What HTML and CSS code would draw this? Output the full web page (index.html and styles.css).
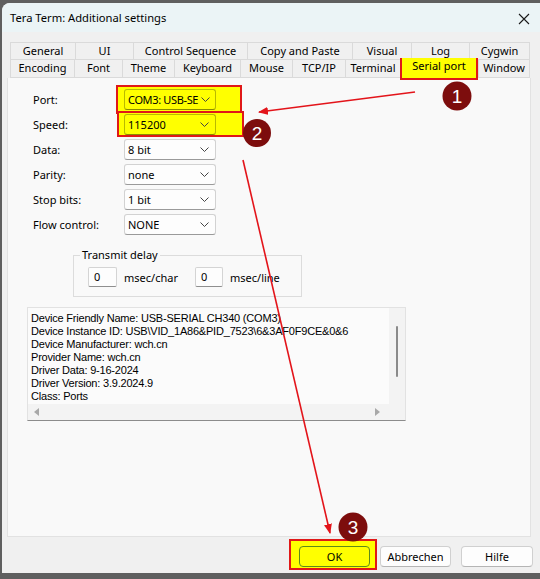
FILE: index.html
```html
<!DOCTYPE html>
<html>
<head>
<meta charset="utf-8">
<link rel="stylesheet" href="styles.css">
</head>
<body>
<div class="window">
  <div class="titlebar">
    <span class="title">Tera Term: Additional settings</span>
    <svg class="close" width="12" height="12" viewBox="0 0 12 12"><path d="M1 1 L11 11 M11 1 L1 11" stroke="#1a1a1a" stroke-width="1.1" fill="none"/></svg>
  </div>
  <div class="content">
    <div class="tabs">
      <div class="tabrow">
        <span class="tab w65">General</span>
        <span class="tab w58">UI</span>
        <span class="tab w114">Control Sequence</span>
        <span class="tab w105">Copy and Paste</span>
        <span class="tab w59">Visual</span>
        <span class="tab w58">Log</span>
        <span class="tab w61">Cygwin</span>
      </div>
      <div class="tabrow">
        <span class="tab w64">Encoding</span>
        <span class="tab w48">Font</span>
        <span class="tab w52">Theme</span>
        <span class="tab w66">Keyboard</span>
        <span class="tab w52">Mouse</span>
        <span class="tab w53">TCP/IP</span>
        <span class="tab w55">Terminal</span>
        <span class="tab w78 active">Serial port</span>
        <span class="tab w52">Window</span>
      </div>
    </div>
    <div class="panel">
      <div class="form">
        <span class="label">Port:</span>
        <div class="cell"><span class="hl hl-port"></span><div class="combo clear tight"><span class="val">COM3: USB-SE</span><svg class="chev" width="9" height="5" viewBox="0 0 9 5"><path d="M0.5 0.5 L4.5 4.5 L8.5 0.5" stroke="#444" fill="none"/></svg></div></div>
        <span class="label">Speed:</span>
        <div class="cell"><span class="hl hl-speed"></span><div class="combo clear"><span class="val">115200</span><svg class="chev" width="9" height="5" viewBox="0 0 9 5"><path d="M0.5 0.5 L4.5 4.5 L8.5 0.5" stroke="#444" fill="none"/></svg></div></div>
        <span class="label">Data:</span>
        <div class="cell"><div class="combo"><span class="val">8 bit</span><svg class="chev" width="9" height="5" viewBox="0 0 9 5"><path d="M0.5 0.5 L4.5 4.5 L8.5 0.5" stroke="#444" fill="none"/></svg></div></div>
        <span class="label">Parity:</span>
        <div class="cell"><div class="combo"><span class="val">none</span><svg class="chev" width="9" height="5" viewBox="0 0 9 5"><path d="M0.5 0.5 L4.5 4.5 L8.5 0.5" stroke="#444" fill="none"/></svg></div></div>
        <span class="label">Stop bits:</span>
        <div class="cell"><div class="combo"><span class="val">1 bit</span><svg class="chev" width="9" height="5" viewBox="0 0 9 5"><path d="M0.5 0.5 L4.5 4.5 L8.5 0.5" stroke="#444" fill="none"/></svg></div></div>
        <span class="label">Flow control:</span>
        <div class="cell"><div class="combo"><span class="val">NONE</span><svg class="chev" width="9" height="5" viewBox="0 0 9 5"><path d="M0.5 0.5 L4.5 4.5 L8.5 0.5" stroke="#444" fill="none"/></svg></div></div>
      </div>
      <fieldset class="delay">
        <legend>Transmit delay</legend>
        <div class="delayrow">
          <span class="field">0</span><span class="unit">msec/char</span>
          <span class="field f2">0</span><span class="unit">msec/line</span>
        </div>
      </fieldset>
      <div class="info">
        <div class="infotext">
          <div>Device Friendly Name: USB-SERIAL CH340 (COM3)</div>
          <div>Device Instance ID: USB\VID_1A86&amp;PID_7523\6&amp;3AF0F9CE&amp;0&amp;6</div>
          <div>Device Manufacturer: wch.cn</div>
          <div>Provider Name: wch.cn</div>
          <div>Driver Data: 9-16-2024</div>
          <div>Driver Version: 3.9.2024.9</div>
          <div>Class: Ports</div>
        </div>
        <div class="vscroll"><span class="thumb"></span></div>
        <div class="hscroll">
          <svg width="6" height="8" viewBox="0 0 6 8"><path d="M5 0 L5 8 L0 4 Z" fill="#a8a8a8"/></svg>
          <svg width="6" height="8" viewBox="0 0 6 8"><path d="M1 0 L1 8 L6 4 Z" fill="#a8a8a8"/></svg>
        </div>
        <div class="corner"></div>
      </div>
    </div>
    <div class="buttons">
      <div class="okwrap"><span class="hl hl-ok"></span><button class="btn ok">OK</button></div>
      <button class="btn">Abbrechen</button>
      <button class="btn">Hilfe</button>
    </div>
  </div>
</div>
<svg class="overlay" width="540" height="579" viewBox="0 0 540 579">
  <defs>
    <marker id="ah" markerWidth="10" markerHeight="8" refX="9" refY="4" orient="auto" markerUnits="userSpaceOnUse">
      <path d="M0 0 L10 4 L0 8 Z" fill="#e3141a"/>
    </marker>
  </defs>
  <line x1="415" y1="92" x2="259" y2="112" stroke="#e3141a" stroke-width="1.6" marker-end="url(#ah)"/>
  <line x1="243" y1="160" x2="330" y2="533" stroke="#e3141a" stroke-width="1.6" marker-end="url(#ah)"/>
  <g class="badge">
    <circle cx="457" cy="96" r="14.5" fill="#7d0d0d"/>
    <text x="457" y="102.5" text-anchor="middle">1</text>
    <circle cx="257" cy="133" r="14" fill="#7d0d0d"/>
    <text x="257" y="139.5" text-anchor="middle">2</text>
    <circle cx="353" cy="527" r="14.5" fill="#7d0d0d"/>
    <text x="353" y="533.5" text-anchor="middle">3</text>
  </g>
</svg>
</body>
</html>
```
FILE: styles.css
```css
html, body {
  margin: 0;
  padding: 0;
}
body {
  width: 540px;
  height: 579px;
  background: #5f5f5f;
  position: relative;
  overflow: hidden;
  font-family: "Noto Sans", "Open Sans", sans-serif;
  font-size: 11px;
  color: #000;
}
.window {
  margin: 3px 0 0 2px;
  width: 538px;
  height: 570px;
  background: #f0f0f0;
  border-top-left-radius: 8px;
  display: flex;
  flex-direction: column;
  overflow: hidden;
}
.titlebar {
  height: 29px;
  background: #ebf4f6;
  display: flex;
  align-items: center;
  justify-content: space-between;
  padding: 0 10px 0 8px;
  flex-shrink: 0;
}
.title {
  font-size: 11.2px;
  line-height: 16px;
  margin-top: 1px;
}
.close {
  margin-top: 2px;
}
.content {
  flex: 1;
  display: flex;
  flex-direction: column;
  padding-top: 10px;
}
.tabs {
  margin-left: 8px;
  display: flex;
  flex-direction: column;
}
.tabrow {
  display: flex;
  height: 18px;
}
.tab {
  box-sizing: border-box;
  height: 18px;
  line-height: 16px;
  text-align: center;
  border: 1px solid #dadada;
  border-right: none;
  background: #f0f0f0;
  white-space: nowrap;
}
.tabrow .tab:last-child {
  border-right: 1px solid #dadada;
}
.tabrow + .tabrow .tab {
  border-top: none;
}
.tab.active {
  background: #ffff00;
  border: 2px solid #e01818;
  height: 22px;
  margin-top: -2px;
  line-height: 15px;
  position: relative;
  z-index: 2;
}
.w48 { width: 48px; } .w52 { width: 52px; } .w53 { width: 53px; } .w55 { width: 55px; }
.w58 { width: 58px; } .w59 { width: 59px; } .w61 { width: 61px; } .w64 { width: 64px; }
.w65 { width: 65px; } .w66 { width: 66px; } .w78 { width: 78px; } .w105 { width: 105px; }
.w114 { width: 114px; }
.panel {
  margin-left: 5px;
  width: 524px;
  height: 459px;
  box-sizing: border-box;
  background: #f9f9f9;
  border: 1px solid #e2e2e2;
  border-top: none;
  padding-top: 11px;
  display: flex;
  flex-direction: column;
  flex-shrink: 0;
}
.form {
  display: grid;
  grid-template-columns: 91px 92px;
  grid-auto-rows: 21px;
  row-gap: 4px;
  padding-left: 25px;
}
.label {
  line-height: 21px;
  white-space: nowrap;
}
.cell {
  position: relative;
}
.combo {
  position: relative;
  z-index: 1;
  box-sizing: border-box;
  height: 21px;
  border: 1px solid #d2d2d2;
  border-bottom-color: #9a9a9a;
  border-radius: 3px;
  background: #fdfdfd;
  display: flex;
  align-items: center;
  gap: 4px;
  padding: 0 6px 0 3px;
  white-space: nowrap;
}
.combo.tight {
  gap: 2px;
  padding-right: 5px;
}
.combo.tight .val {
  letter-spacing: -0.35px;
}
.val {
  flex: 1;
  min-width: 0;
  overflow: hidden;
}
.combo.clear {
  background: transparent;
  border-color: #b9b900;
  border-bottom-color: #8a8a00;
}
.chev {
  flex-shrink: 0;
}
.hl {
  position: absolute;
  background: #ffff00;
  border: 2px solid #e01818;
  box-sizing: border-box;
  z-index: 0;
}
.hl-port {
  left: -8px; right: -26px; top: -4px; bottom: -4px;
}
.hl-speed {
  left: -7px; right: -28px; top: -3px; bottom: -2px;
}
.delay {
  margin: 12px 0 0 65px;
  width: 227px;
  box-sizing: border-box;
  border: 1px solid #dcdcdc;
  padding: 4px 0 9px 14px;
}
.delay legend {
  padding: 0 2px;
  margin-left: -8px;
  line-height: 16px;
}
.delayrow {
  display: flex;
  align-items: center;
  height: 20px;
}
.field {
  box-sizing: border-box;
  width: 29px;
  height: 20px;
  border: 1px solid #d4d4d4;
  border-bottom-color: #8f8f8f;
  border-radius: 2px;
  background: #fdfdfd;
  padding-left: 5px;
  line-height: 18px;
}
.f2 {
  width: 28px;
}
.unit {
  width: 78px;
  padding-left: 7px;
  box-sizing: border-box;
}
.info {
  margin: 10px 0 0 19px;
  width: 379px;
  height: 114px;
  box-sizing: border-box;
  border: 1px solid #e2e2e2;
  border-bottom-color: #8c8c8c;
  display: grid;
  grid-template-columns: 1fr 16px;
  grid-template-rows: 1fr 16px;
  background: #f0f0f0;
}
.infotext {
  background: #fbfbfb;
  padding: 4px 0 0 3px;
  font-family: "Liberation Sans", Arial, sans-serif;
  font-size: 11px;
  letter-spacing: -0.2px;
  line-height: 13px;
  white-space: nowrap;
  overflow: hidden;
}
.vscroll {
  background: #f3f3f3;
  display: flex;
  justify-content: center;
  padding-top: 18px;
}
.thumb {
  width: 2px;
  height: 51px;
  background: #8a8a8a;
  border-radius: 1px;
}
.hscroll {
  background: #f3f3f3;
  display: flex;
  align-items: center;
  justify-content: space-between;
  padding: 0 9px 0 6px;
}
.corner {
  background: #f3f3f3;
}
.buttons {
  flex: 1;
  display: flex;
  justify-content: flex-end;
  align-items: flex-start;
  gap: 10px;
  padding: 9px 7px 0 0;
}
.btn {
  box-sizing: border-box;
  width: 72px;
  height: 21px;
  font: inherit;
  font-size: 11px;
  color: #000;
  background: #fdfdfd;
  border: 1px solid #d0d0d0;
  border-bottom-color: #b5b5b5;
  border-radius: 4px;
  padding: 0;
}
.btn:nth-child(2) {
  width: 71px;
}
.okwrap {
  position: relative;
  display: flex;
}
.hl-ok {
  left: -10px; right: -7px; top: -7px; bottom: -3px;
}
.btn.ok {
  position: relative;
  z-index: 1;
  background: #ffff00;
  border: 1px solid #5f8a1a;
}
.overlay {
  position: absolute;
  left: 0;
  top: 0;
  pointer-events: none;
}
.badge text {
  font-family: "Liberation Sans", Arial, sans-serif;
  font-size: 19px;
  fill: #ffffff;
}
```
